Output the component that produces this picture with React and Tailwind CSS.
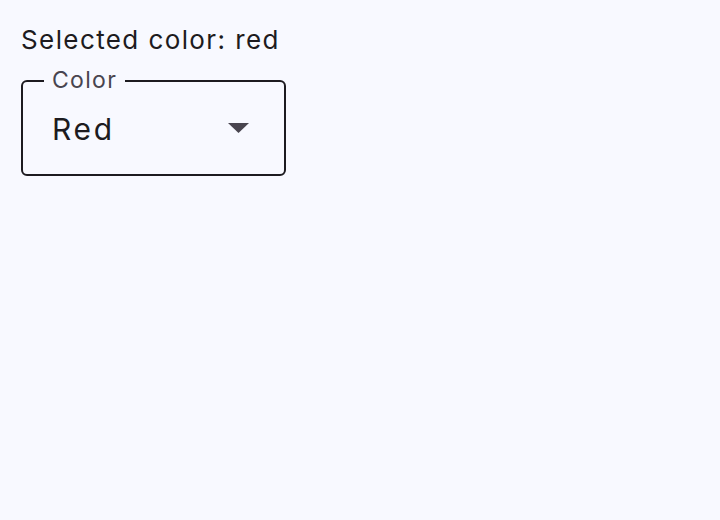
import React, { useState } from 'react';

const colors = [
  { value: 'red', label: 'Red' },
  { value: 'green', label: 'Green' },
  { value: 'blue', label: 'Blue' },
];

export default function App() {
  const [color] = useState('red');
  const current = colors.find(c => c.value === color);

  return (
    <div
      className="min-h-screen w-full bg-[#f8f9ff] px-[21px] pt-[25px] text-[#1d1b20]"
      style={{ fontFamily: 'Inter, "Noto Sans", sans-serif' }}
    >
      <p className="text-[26px] leading-[30px] tracking-[1.4px]">Selected color: {color}</p>

      {/* outlined select */}
      <fieldset className="mt-[14px] w-[265px] h-[107px] rounded-[6px] border-2 border-[#1d1b20]">
        <legend className="ml-[21px] px-[8px] text-[23px] leading-none tracking-[1.3px] text-[#49454f]">
          Color
        </legend>
        <div className="flex items-start justify-between pl-[29px] pr-[35px] pt-[22px]">
          <span className="text-[30px] leading-[30px] tracking-[2.7px]">{current.label}</span>
          <svg className="mt-[9px]" width="21" height="10" viewBox="0 0 21 10">
            <path d="M0 0h21L10.5 10z" fill="#49454f" />
          </svg>
        </div>
      </fieldset>
    </div>
  );
}
